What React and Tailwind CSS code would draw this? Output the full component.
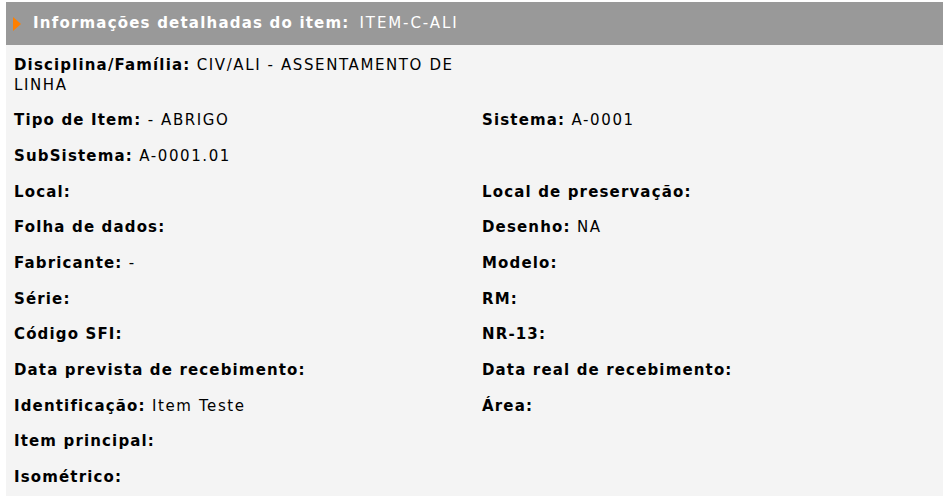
const rows = [
  [{ label: 'Disciplina/Família:', value: 'CIV/ALI - ASSENTAMENTO DE LINHA' }, null],
  [{ label: 'Tipo de Item:', value: '- ABRIGO' }, { label: 'Sistema:', value: 'A-0001' }],
  [{ label: 'SubSistema:', value: 'A-0001.01' }, null],
  [{ label: 'Local:' }, { label: 'Local de preservação:' }],
  [{ label: 'Folha de dados:' }, { label: 'Desenho:', value: 'NA' }],
  [{ label: 'Fabricante:', value: '-' }, { label: 'Modelo:' }],
  [{ label: 'Série:' }, { label: 'RM:' }],
  [{ label: 'Código SFI:' }, { label: 'NR-13:' }],
  [{ label: 'Data prevista de recebimento:' }, { label: 'Data real de recebimento:' }],
  [{ label: 'Identificação:', value: 'Item Teste' }, { label: 'Área:' }],
  [{ label: 'Item principal:' }, null],
  [{ label: 'Isométrico:' }, null],
]

const Field = ({ field }) => {
  if (!field) return <div />
  return (
    <div className="py-[8.1px] leading-[19.5px]">
      <span className="font-bold tracking-[1.15px]">{field.label}</span>
      {field.value && <span className="tracking-[1.6px]"> {field.value}</span>}
    </div>
  )
}

export default function App() {
  return (
    <div className="min-h-[503px] bg-white pl-[6px] pr-[4px] pt-[2px] font-[family-name:'DejaVu_Sans',sans-serif] text-[15px] text-black">
      <div className="bg-[#f4f4f4]">
        <div className="flex h-[43px] items-center bg-[#999999] pl-[7px] text-white">
          <svg width="8" height="14" viewBox="0 0 8 14" className="shrink-0">
            <polygon points="0,0 8,7 0,14" fill="#ff7f00" />
          </svg>
          <span className="ml-[12px] font-bold tracking-[1.2px]">Informações detalhadas do item:</span>
          <span className="ml-[10px] tracking-[1.9px]">ITEM-C-ALI</span>
        </div>
        <div className="pt-[3px]">
          {rows.map((row, i) => (
            <div key={i} className="grid grid-cols-[468px_1fr] pl-[8px]">
              <div className="pr-[6px]">
                <Field field={row[0]} />
              </div>
              <Field field={row[1]} />
            </div>
          ))}
        </div>
      </div>
    </div>
  )
}
